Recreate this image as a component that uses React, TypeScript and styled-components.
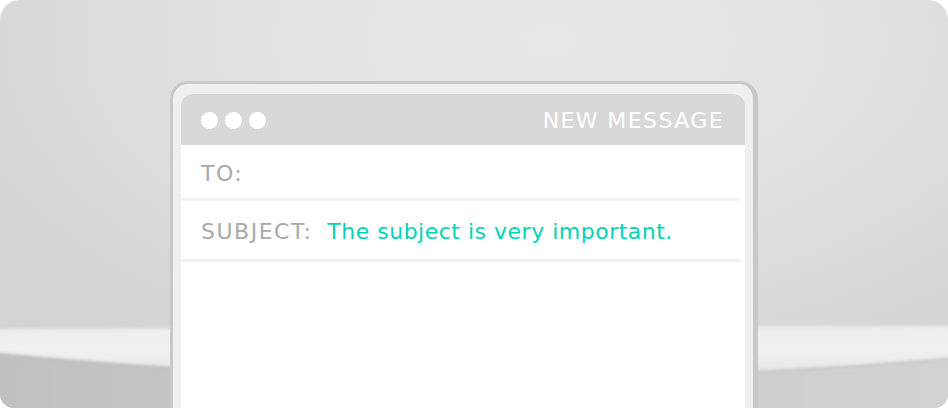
import React from "react";
import styled, { createGlobalStyle } from "styled-components";

const GlobalStyle = createGlobalStyle`
  html, body { margin: 0; padding: 0; background: #ffffff; }
  * { box-sizing: border-box; }
`;

const Scene = styled.div`
  position: relative;
  width: 948px;
  height: 408px;
  border-radius: 20px 20px 14px 14px;
  overflow: hidden;
  background:
    radial-gradient(ellipse 70% 90% at 58% 10%, #e8e8e8 0%, #e2e2e2 45%, #d9d9d9 80%, #d4d4d4 100%);
  padding: 81px 0 0 170px;
`;

const Backdrop = styled.svg`
  position: absolute;
  left: 0;
  top: 0;
  width: 948px;
  height: 408px;
  z-index: 0;
`;

const Frame = styled.div`
  position: relative;
  z-index: 1;
  width: 588px;
  height: 340px;
  border-style: solid;
  border-color: #c8c8c8;
  border-width: 3px 5px 0 3px;
  border-radius: 18px 18px 0 0;
  background: #efefef;
  padding: 10px 8px 0 8px;
`;

const Panel = styled.div`
  height: 100%;
  background: #ffffff;
  border-radius: 12px 12px 0 0;
  overflow: hidden;
  display: flex;
  flex-direction: column;
`;

const Header = styled.div`
  height: 51px;
  flex: none;
  background: #d8d8d8;
  display: flex;
  align-items: center;
  justify-content: space-between;
  padding: 0 21px 0 20px;
`;

const Dots = styled.div`
  display: flex;
  gap: 7px;
  padding-top: 1px;
`;

const Dot = styled.span`
  width: 17px;
  height: 17px;
  border-radius: 50%;
  background: #ffffff;
`;

const Title = styled.div`
  font-family: "DejaVu Sans", sans-serif;
  font-size: 22px;
  font-weight: 400;
  letter-spacing: 1.4px;
  color: #ffffff;
  padding-top: 1px;
`;

const Row = styled.div<{ $h: number }>`
  height: ${(p) => p.$h}px;
  flex: none;
  margin-right: 5px;
  border-bottom: 3px solid #f1f1f1;
  display: flex;
  align-items: center;
  padding: 3px 0 0 20px;
  font-family: "DejaVu Sans", sans-serif;
  font-size: 22px;
`;

const Label = styled.span`
  color: #a9a9a9;
  letter-spacing: 1.5px;
  margin-right: 15px;
`;

const Value = styled.span`
  color: #00d3b5;
  letter-spacing: 0.5px;
`;

export default function App() {
  return (
    <>
      <GlobalStyle />
      <Scene>
        <Backdrop viewBox="0 0 948 408" aria-hidden="true">
          <defs>
            <linearGradient id="band" x1="0" y1="0" x2="0" y2="1">
              <stop offset="0" stopColor="#ececec" />
              <stop offset="0.45" stopColor="#f1f1f1" />
              <stop offset="1" stopColor="#e4e4e4" />
            </linearGradient>
            <linearGradient id="face" x1="0" y1="0" x2="1" y2="0">
              <stop offset="0" stopColor="#c0c0c0" />
              <stop offset="0.5" stopColor="#c9c9c9" />
              <stop offset="1" stopColor="#d2d2d2" />
            </linearGradient>
            <filter id="soft" x="-5%" y="-20%" width="110%" height="140%">
              <feGaussianBlur stdDeviation="1.5" />
            </filter>
          </defs>
          <g filter="url(#soft)">
            <path d="M-10,329 L958,326 L958,357 Q474,400 -10,352 Z" fill="url(#band)" />
            <path d="M-10,352 Q474,400 958,357 L958,420 L-10,420 Z" fill="url(#face)" />
            <path d="M-10,353 Q474,401 958,358" fill="none" stroke="#bababa" strokeWidth="2" opacity="0.5" />
          </g>
        </Backdrop>
        <Frame>
          <Panel>
            <Header>
              <Dots>
                <Dot />
                <Dot />
                <Dot />
              </Dots>
              <Title>NEW MESSAGE</Title>
            </Header>
            <Row $h={56}>
              <Label>TO:</Label>
            </Row>
            <Row $h={61}>
              <Label>SUBJECT:</Label>
              <Value>The subject is very important.</Value>
            </Row>
          </Panel>
        </Frame>
      </Scene>
    </>
  );
}
